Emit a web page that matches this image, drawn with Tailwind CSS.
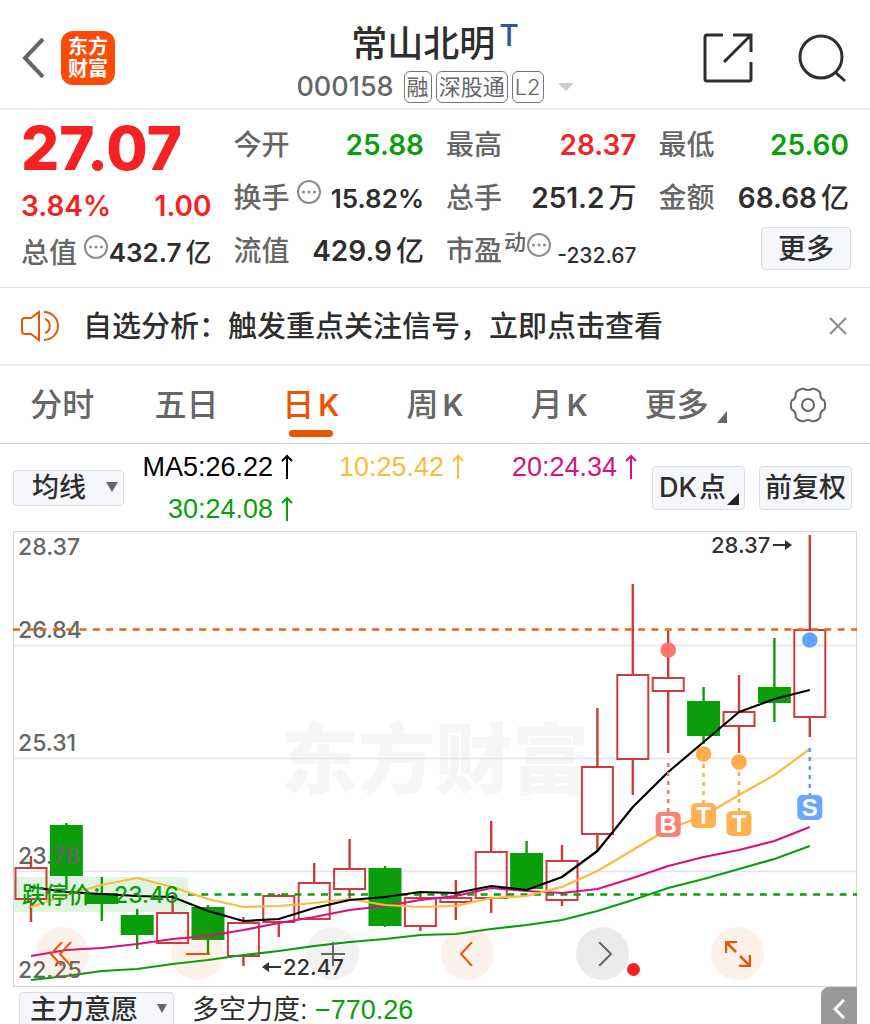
<!DOCTYPE html>
<html lang="zh-CN">
<head>
  <meta charset="UTF-8" />
  <meta name="viewport" content="width=device-width, initial-scale=1.0"/>
  <title>常山北明 000158</title>
  <script src="https://cdn.jsdelivr.net/npm/@tailwindcss/browser@4"></script>
</head>
<body class="bg-white text-[#2e2e2e] h-screen overflow-hidden font-['Inter','Noto_Sans_CJK_SC',sans-serif]">

  <svg class="hidden">
    <symbol id="up" viewBox="0 0 12 26"><path d="M6 25V2M1 7l5-5 5 5" fill="none" stroke="currentColor" stroke-width="2"/></symbol>
    <symbol id="dots" viewBox="0 0 26 26">
      <circle cx="13" cy="13" r="11" fill="none" stroke="#8c8c8c" stroke-width="2"/>
      <circle cx="7.500" cy="13" r="1.500" fill="#8c8c8c"/><circle cx="13" cy="13" r="1.500" fill="#8c8c8c"/><circle cx="18.500" cy="13" r="1.500" fill="#8c8c8c"/>
    </symbol>
  </svg>

  <!-- header -->
  <header class="grid grid-cols-[1fr_auto_1fr] items-center h-[110px] border-b-2 border-[#ececec] px-[21px]">
    <div class="flex items-center gap-4 pt-2">
      <button aria-label="返回">
        <svg class="w-6 h-10" viewBox="0 0 24 40" fill="none" stroke="#666" stroke-width="4"><path d="M22 1L4 20l18 19"/></svg>
      </button>
      <a href="#" class="flex flex-col items-center justify-center w-[54px] h-[54px] rounded-xl bg-[#ff4a05] text-white text-xl leading-[22px] font-bold">
        <span>东方</span><span>财富</span>
      </a>
    </div>
    <div class="flex flex-col items-center pt-2 pb-1">
      <h1 class="flex items-start text-4xl leading-[54px] font-medium pt-2">常山北明<sup class="ml-1 top-0 text-3xl leading-9 font-medium text-[#2f569b]">T</sup></h1>
      <div class="flex items-center gap-1 h-8 text-[22px] leading-[30px] text-[#666]">
        <span class="text-[27px] font-medium mr-[6px]">000158</span>
        <span class="border border-[#777] rounded-md px-[2px]">融</span>
        <span class="border border-[#777] rounded-md px-[2px]">深股通</span>
        <span class="border border-[#777] rounded-md px-[2px] font-light">L2</span>
        <svg class="w-4 h-2 ml-[10px]" viewBox="0 0 16 8"><path d="M0 0h16l-8 8z" fill="#ccc"/></svg>
      </div>
    </div>
    <div class="flex items-center justify-end gap-11 pt-2 pr-[2px]">
      <button aria-label="分享">
        <svg class="w-[50px] h-[50px]" viewBox="0 0 50 50" fill="none" stroke="#2e2e2e" stroke-width="3"><path d="M20 2H4Q2 2 2 4V46Q2 48 4 48H46Q48 48 48 46V29M30 2H48V19M48 2L21 29"/></svg>
      </button>
      <button aria-label="搜索">
        <svg class="w-[50px] h-[50px]" viewBox="0 0 50 50" fill="none" stroke="#2e2e2e" stroke-width="3"><circle cx="24" cy="24" r="21"/><path d="M38 39l10 9"/></svg>
      </button>
    </div>
  </header>

  <!-- quote -->
  <section class="grid grid-cols-4 gap-x-[22px] px-[21px] pt-2 h-[178px] border-b border-[#dcdcdc] text-[28px] font-semibold whitespace-nowrap">
    <div>
      <div class="h-[60px] text-6xl leading-[60px] font-extrabold text-[#f42222]">27.07</div>
      <div class="flex items-center justify-between h-[54px] pt-[2px] text-[#f42222]"><span>3.84%</span><span>1.00</span></div>
      <div class="flex items-center justify-between h-[41px]">
        <span class="flex items-center font-medium text-[#666]">总值<svg class="w-[26px] h-[26px] ml-[6px] mb-3 -mr-1"><use href="#dots"/></svg></span>
        <span class="text-[26px]">432.7<span class="ml-1 font-medium">亿</span></span>
      </div>
    </div>
    <div>
      <div class="flex items-center justify-between h-[53px]"><span class="font-medium text-[#666]">今开</span><span class="text-[#0a9f0a]">25.88</span></div>
      <div class="flex items-center justify-between h-[53px]">
        <span class="flex items-center font-medium text-[#666]">换手<svg class="w-[26px] h-[26px] ml-[6px] mb-3"><use href="#dots"/></svg></span>
        <span class="text-[26px] pt-[2px]">15.82%</span>
      </div>
      <div class="flex items-center justify-between h-[53px]"><span class="font-medium text-[#666]">流值</span><span>429.9<span class="ml-1 font-medium">亿</span></span></div>
    </div>
    <div>
      <div class="flex items-center justify-between h-[53px]"><span class="font-medium text-[#666]">最高</span><span class="text-[#f42222]">28.37</span></div>
      <div class="flex items-center justify-between h-[53px]"><span class="font-medium text-[#666]">总手</span><span>251.2<span class="ml-1 font-medium">万</span></span></div>
      <div class="flex items-center justify-between h-[53px]">
        <span class="flex items-center font-medium text-[#666]">市盈<span class="text-[22px] ml-[2px] mb-4">动</span><svg class="w-[26px] h-[26px] mb-3"><use href="#dots"/></svg></span>
        <span class="text-[21px] font-medium pt-[10px]">-232.67</span>
      </div>
    </div>
    <div>
      <div class="flex items-center justify-between h-[53px]"><span class="font-medium text-[#666]">最低</span><span class="text-[#0a9f0a]">25.60</span></div>
      <div class="flex items-center justify-between h-[53px]"><span class="font-medium text-[#666]">金额</span><span>68.68<span class="ml-1 font-medium">亿</span></span></div>
      <div class="flex items-center justify-end h-[53px] pb-1">
        <button class="w-[90px] h-[43px] -mr-[2px] border border-[#dcdce4] rounded bg-[#f6f7fb] font-medium leading-10">更多</button>
      </div>
    </div>
  </section>

  <!-- notice -->
  <section class="flex items-center h-[78px] border-b-2 border-[#ececec] px-[21px]">
    <svg class="w-[38px] h-8 mr-6 shrink-0" viewBox="0 0 38 32" fill="none" stroke="#ea5504" stroke-width="2"><path d="M18 2v28l-8-6H4q-3 0-3-3V11q0-3 3-3h6zM24 9a7.500 7.500 0 0 1 0 14M23 2a14 14 0 0 1 0 28"/></svg>
    <a href="#" class="pt-[2px] text-[29px] font-medium whitespace-nowrap">自选分析：触发重点关注信号，立即点击查看</a>
    <button class="ml-auto mr-[2px]" aria-label="关闭">
      <svg class="w-[18px] h-[18px]" viewBox="0 0 18 18" stroke="#8c8c8c" stroke-width="2"><path d="M1 1l16 16M17 1L1 17"/></svg>
    </button>
  </section>

  <!-- tabs -->
  <nav class="grid grid-cols-7 h-[78px] border-b border-[#cfcfd6] text-[32px] font-medium text-[#666] whitespace-nowrap">
    <button>分时</button>
    <button>五日</button>
    <button class="relative text-[#ea5504]">日<span class="text-3xl font-semibold ml-1">K</span><span class="absolute bottom-[6px] inset-x-10 h-[7px] rounded-full bg-[#ea5504]"></span></button>
    <button>周<span class="text-3xl font-semibold ml-1">K</span></button>
    <button>月<span class="text-3xl font-semibold ml-1">K</span></button>
    <button class="flex items-center justify-center gap-2 pl-1">更多<svg class="w-[10px] h-3 mt-6" viewBox="0 0 10 12"><path d="M10 0v12H0z" fill="#666"/></svg></button>
    <button class="flex items-center justify-center" aria-label="设置">
      <svg class="w-9 h-9" viewBox="-18 -18 36 36" fill="none" stroke="#666" stroke-width="2">
        <path stroke-linejoin="round" d="M16.300 4.500Q11.500 6.500 12.400 12.100Q9 16.500 4.500 16.300Q0 13.500-4.500 16.300Q-9 16.500-12.400 12.100Q-11.500 6.500-16.300 4.500Q-18 0-16.300-4.500Q-11.500-6.500-12.400-12.100Q-9-16.500-4.500-16.300Q0-13.500 4.500-16.300Q9-16.500 12.400-12.100Q11.500-6.500 16.300-4.500Q18 0 16.300 4.500Z"/>
        <circle r="6"/>
      </svg>
    </button>
  </nav>

  <!-- moving averages -->
  <section class="flex h-[87px] pl-[13px] pr-[18px] whitespace-nowrap">
    <div class="relative mt-[26px] w-[111px] h-9 shrink-0">
      <select aria-label="指标" class="appearance-none w-full h-full pl-[18px] border border-[#dcdce4] rounded bg-[#f6f7fb] text-[27px] leading-8 font-medium">
        <option>均线</option>
      </select>
      <svg class="absolute right-[6px] top-3 w-3 h-[10px] pointer-events-none" viewBox="0 0 12 10"><path d="M0 0h12L6 10z" fill="#666"/></svg>
    </div>
    <div class="grid grid-cols-[150px_171px_173px] content-start justify-items-end ml-[19px] pt-[2px] text-[27px] leading-[42px] font-['Liberation_Sans',sans-serif]">
      <span class="flex items-center gap-2 text-black">MA5:26.22<svg class="w-3 h-[26px]"><use href="#up"/></svg></span>
      <span class="flex items-center gap-2 text-[#fdbb3c]">10:25.42<svg class="w-3 h-[26px]"><use href="#up"/></svg></span>
      <span class="flex items-center gap-2 text-[#d6127f]">20:24.34<svg class="w-3 h-[26px]"><use href="#up"/></svg></span>
      <span class="flex items-center gap-2 text-[#0a9f0a]">30:24.08<svg class="w-3 h-[26px]"><use href="#up"/></svg></span>
    </div>
    <div class="flex gap-[14px] ml-auto mt-[22px] text-[27px] leading-10 font-medium">
      <button class="relative w-[93px] h-11 pr-3 border border-[#dcdce4] rounded bg-[#f6f7fb]">DK<span class="ml-[2px]">点</span><svg class="absolute right-[5px] bottom-1 w-3 h-3" viewBox="0 0 12 12"><path d="M12 0v12H0z" fill="#222"/></svg></button>
      <button class="w-[93px] h-11 border border-[#dcdce4] rounded bg-[#f6f7fb]">前复权</button>
    </div>
  </section>

  <!-- k-line chart -->
  <section class="relative mx-[13px]">
    <svg id="chart" class="block w-full h-auto" viewBox="13 531 844 456">
      <text x="281" y="788" font-size="77" font-weight="900" fill="#f6f6f6">东方财富</text>
      <path d="M13 645.500H857M13 758.500H857M13 871.500H857" stroke="#e4e4ee" stroke-width="1.500"/>
      <rect x="13.500" y="531.500" width="843" height="455" fill="none" stroke="#d6d6de"/>
      <g id="candles"></g>
      <path d="M188 894.500H857" stroke="#0a9f0a" stroke-width="2.500" stroke-dasharray="7 6.300"/>
      <rect x="14" y="877" width="174" height="35" rx="3" fill="#0a9f0a" fill-opacity=".12"/>
      <g id="lines" fill="none" stroke-width="2.200" stroke-linejoin="round"></g>
      <g id="marks"></g>
      <g font-size="23" font-weight="500" fill="#666">
        <text x="18" y="555">28.37</text>
        <text x="18" y="638">26.84</text>
        <text x="18" y="751">25.31</text>
        <text x="18" y="864">23.78</text>
        <text x="18" y="978">22.25</text>
      </g>
      <path d="M13 629.500H857" stroke="#f2600c" stroke-width="2.500" stroke-dasharray="7 6.300"/>
      <g font-size="23" font-weight="500" fill="#0a9f0a">
        <text x="22" y="903">跌停价：</text>
        <text x="114" y="903">23.46</text>
      </g>
      <g font-size="22" font-weight="500" fill="#333">
        <text x="711" y="553">28.37</text>
        <text x="283" y="975">22.47</text>
      </g>
      <path d="M773 545h16M265 967h16" stroke="#333" stroke-width="2"/>
      <path d="M785 540l7 5-7 5zM269 962l-7 5 7 5z" fill="#333"/>
    </svg>

    <div class="absolute left-[23px] right-[93px] bottom-[7px] flex justify-between">
      <button aria-label="最早" class="flex items-center justify-center w-[53px] h-[53px] rounded-full bg-[#ea5504]/8">
        <svg class="w-6 h-6 mr-1" viewBox="0 0 24 24" fill="none" stroke="#ea5504" stroke-width="2"><path d="M13 0L2 12l11 12M22 0L11 12l11 12"/></svg>
      </button>
      <button aria-label="缩小" class="flex items-center justify-center w-[53px] h-[53px] rounded-full bg-[#ea5504]/8">
        <svg class="w-6 h-6" viewBox="0 0 24 24" stroke="#ea5504" stroke-width="2"><path d="M0 12h24"/></svg>
      </button>
      <button aria-label="放大" class="flex items-center justify-center w-[53px] h-[53px] rounded-full bg-black/5">
        <svg class="w-6 h-6" viewBox="0 0 24 24" stroke="#666" stroke-width="2"><path d="M0 12h24M12 0v24"/></svg>
      </button>
      <button aria-label="前一段" class="flex items-center justify-center w-[53px] h-[53px] rounded-full bg-[#ea5504]/8">
        <svg class="w-6 h-6" viewBox="0 0 24 24" fill="none" stroke="#ea5504" stroke-width="2"><path d="M16 0L5 12l11 12"/></svg>
      </button>
      <button aria-label="后一段" class="relative flex items-center justify-center w-[53px] h-[53px] rounded-full bg-black/8">
        <svg class="w-6 h-6" viewBox="0 0 24 24" fill="none" stroke="#666" stroke-width="2"><path d="M8 0l12 12L8 24"/></svg>
        <span class="absolute -right-[11px] bottom-1 w-[13px] h-[13px] rounded-full bg-[#f42222]"></span>
      </button>
      <button aria-label="全屏" class="flex items-center justify-center w-[53px] h-[53px] rounded-full bg-[#ea5504]/8">
        <svg class="w-[26px] h-[26px]" viewBox="0 0 26 26" fill="none" stroke="#ea5504" stroke-width="2.500"><path d="M1 12V1h11M1 1l10 10M25 14v11H14M25 25L15 15"/></svg>
      </button>
    </div>
  </section>

  <!-- sub chart -->
  <section class="flex items-start justify-between pl-[19px] pr-[13px]">
    <div class="flex items-center gap-[18px] pt-[5px]">
      <div class="relative w-[155px] h-9">
        <select aria-label="副图指标" class="appearance-none w-full h-full pl-[10px] border border-[#dcdce4] rounded bg-[#f6f7fb] text-[27px] leading-8 font-medium">
          <option>主力意愿</option>
        </select>
        <svg class="absolute right-[7px] top-3 w-[10px] h-[9px] pointer-events-none" viewBox="0 0 10 9"><path d="M0 0h10L5 9z" fill="#666"/></svg>
      </div>
      <p class="text-[27px] leading-9 font-['Liberation_Sans','Noto_Sans_CJK_SC',sans-serif]">多空力度: <span class="text-[#0a9f0a]">−770.26</span></p>
    </div>
    <button aria-label="展开" class="flex items-center justify-center w-9 h-11 rounded-tl-lg bg-[#999]">
      <svg class="w-3 h-5" viewBox="0 0 12 20" fill="none" stroke="#fff" stroke-width="3"><path d="M11 1L2 10l9 9"/></svg>
    </button>
  </section>

  <script>
    // high, body top, body bottom, low, rising
    const candles = [
      [856, 868, 899, 922, 1], [823, 825, 876, 890, 0], [877, 893, 904, 921, 0], [909, 915, 935, 949, 0],
      [895, 913, 943, 943, 1], [905, 907, 940, 955, 0], [917, 923, 956, 966, 1], [894, 896, 922, 937, 1],
      [863, 883, 919, 919, 1], [839, 869, 889, 898, 1], [866, 868, 926, 927, 0], [891, 898, 926, 931, 1],
      [880, 898, 902, 920, 1], [821, 852, 898, 913, 1], [841, 853, 889, 889, 0], [845, 861, 900, 906, 1],
      [708, 767, 834, 851, 1], [584, 675, 759, 795, 1], [631, 678, 691, 753, 1], [687, 701, 736, 744, 0],
      [675, 712, 726, 753, 1], [638, 687, 703, 722, 0], [535, 630, 717, 737, 1]
    ];
    const lines = {
      '#000': [887, 892, 894, 896, 897, 911, 921, 919, 908, 900, 897, 892, 893, 886, 890, 877, 851, 807, 772, 742, 712, 699, 690],
      '#fdbb3c': [907, 895, 885, 878, 887, 899, 907, 906, 903, 899, 905, 907, 906, 898, 896, 887, 871, 850, 829, 816, 795, 775, 749],
      '#d6127f': [956, 950, 948, 944, 939, 936, 930, 923, 917, 910, 906, 900, 896, 888, 891, 893, 889, 878, 866, 857, 850, 841, 827],
      '#0a9f0a': [980, 976, 971, 969, 964, 960, 955, 951, 946, 942, 939, 935, 934, 929, 925, 920, 911, 900, 888, 879, 869, 859, 846]
    };
    // index, dot y, line start, box y, letter, colour
    const marks = [
      [18, 650, 763, 812, 'B', '#fa7366'], [19, 754, 755, 803, 'T', '#ffa940'],
      [20, 762, 763, 811, 'T', '#ffa940'], [22, 640, 748, 795, 'S', '#5a9dff']
    ];
    const x = i => 31 + i * 35.4;

    document.getElementById('candles').innerHTML = candles.map(([h, t, b, l, up], i) => {
      const c = up ? '#d2393c' : '#0a9f0a';
      return `<path d="M${x(i)} ${h}V${t}M${x(i)} ${b}V${l}" stroke="${c}" stroke-width="2.4"/>` +
        (up ? `<rect x="${x(i) - 15.5}" y="${t}" width="31" height="${b - t}" fill="none" stroke="${c}" stroke-width="2"/>`
            : `<rect x="${x(i) - 16.5}" y="${t}" width="33" height="${b - t}" fill="${c}"/>`);
    }).join('');

    document.getElementById('lines').innerHTML = Object.entries(lines).reverse().map(([c, ys]) =>
      `<polyline stroke="${c}" points="${ys.map((y, i) => x(i) + ',' + y).join(' ')}"/>`).join('');

    document.getElementById('marks').innerHTML = marks.map(([i, dot, start, box, s, c]) =>
      `<circle cx="${x(i)}" cy="${dot}" r="7.800" fill="${c}" fill-opacity=".95"/>
       <path d="M${x(i)} ${start}V${box}" stroke="${c}" stroke-width="2.500" stroke-dasharray="4 5"/>
       <rect x="${x(i) - 12.5}" y="${box}" width="25" height="25" rx="5" fill="${c}" fill-opacity=".9"/>
       <text x="${x(i)}" y="${box + 21}" text-anchor="middle" font-family="Liberation Sans" font-size="24" font-weight="700" fill="#fff">${s}</text>`).join('');
  </script>
</body>
</html>
